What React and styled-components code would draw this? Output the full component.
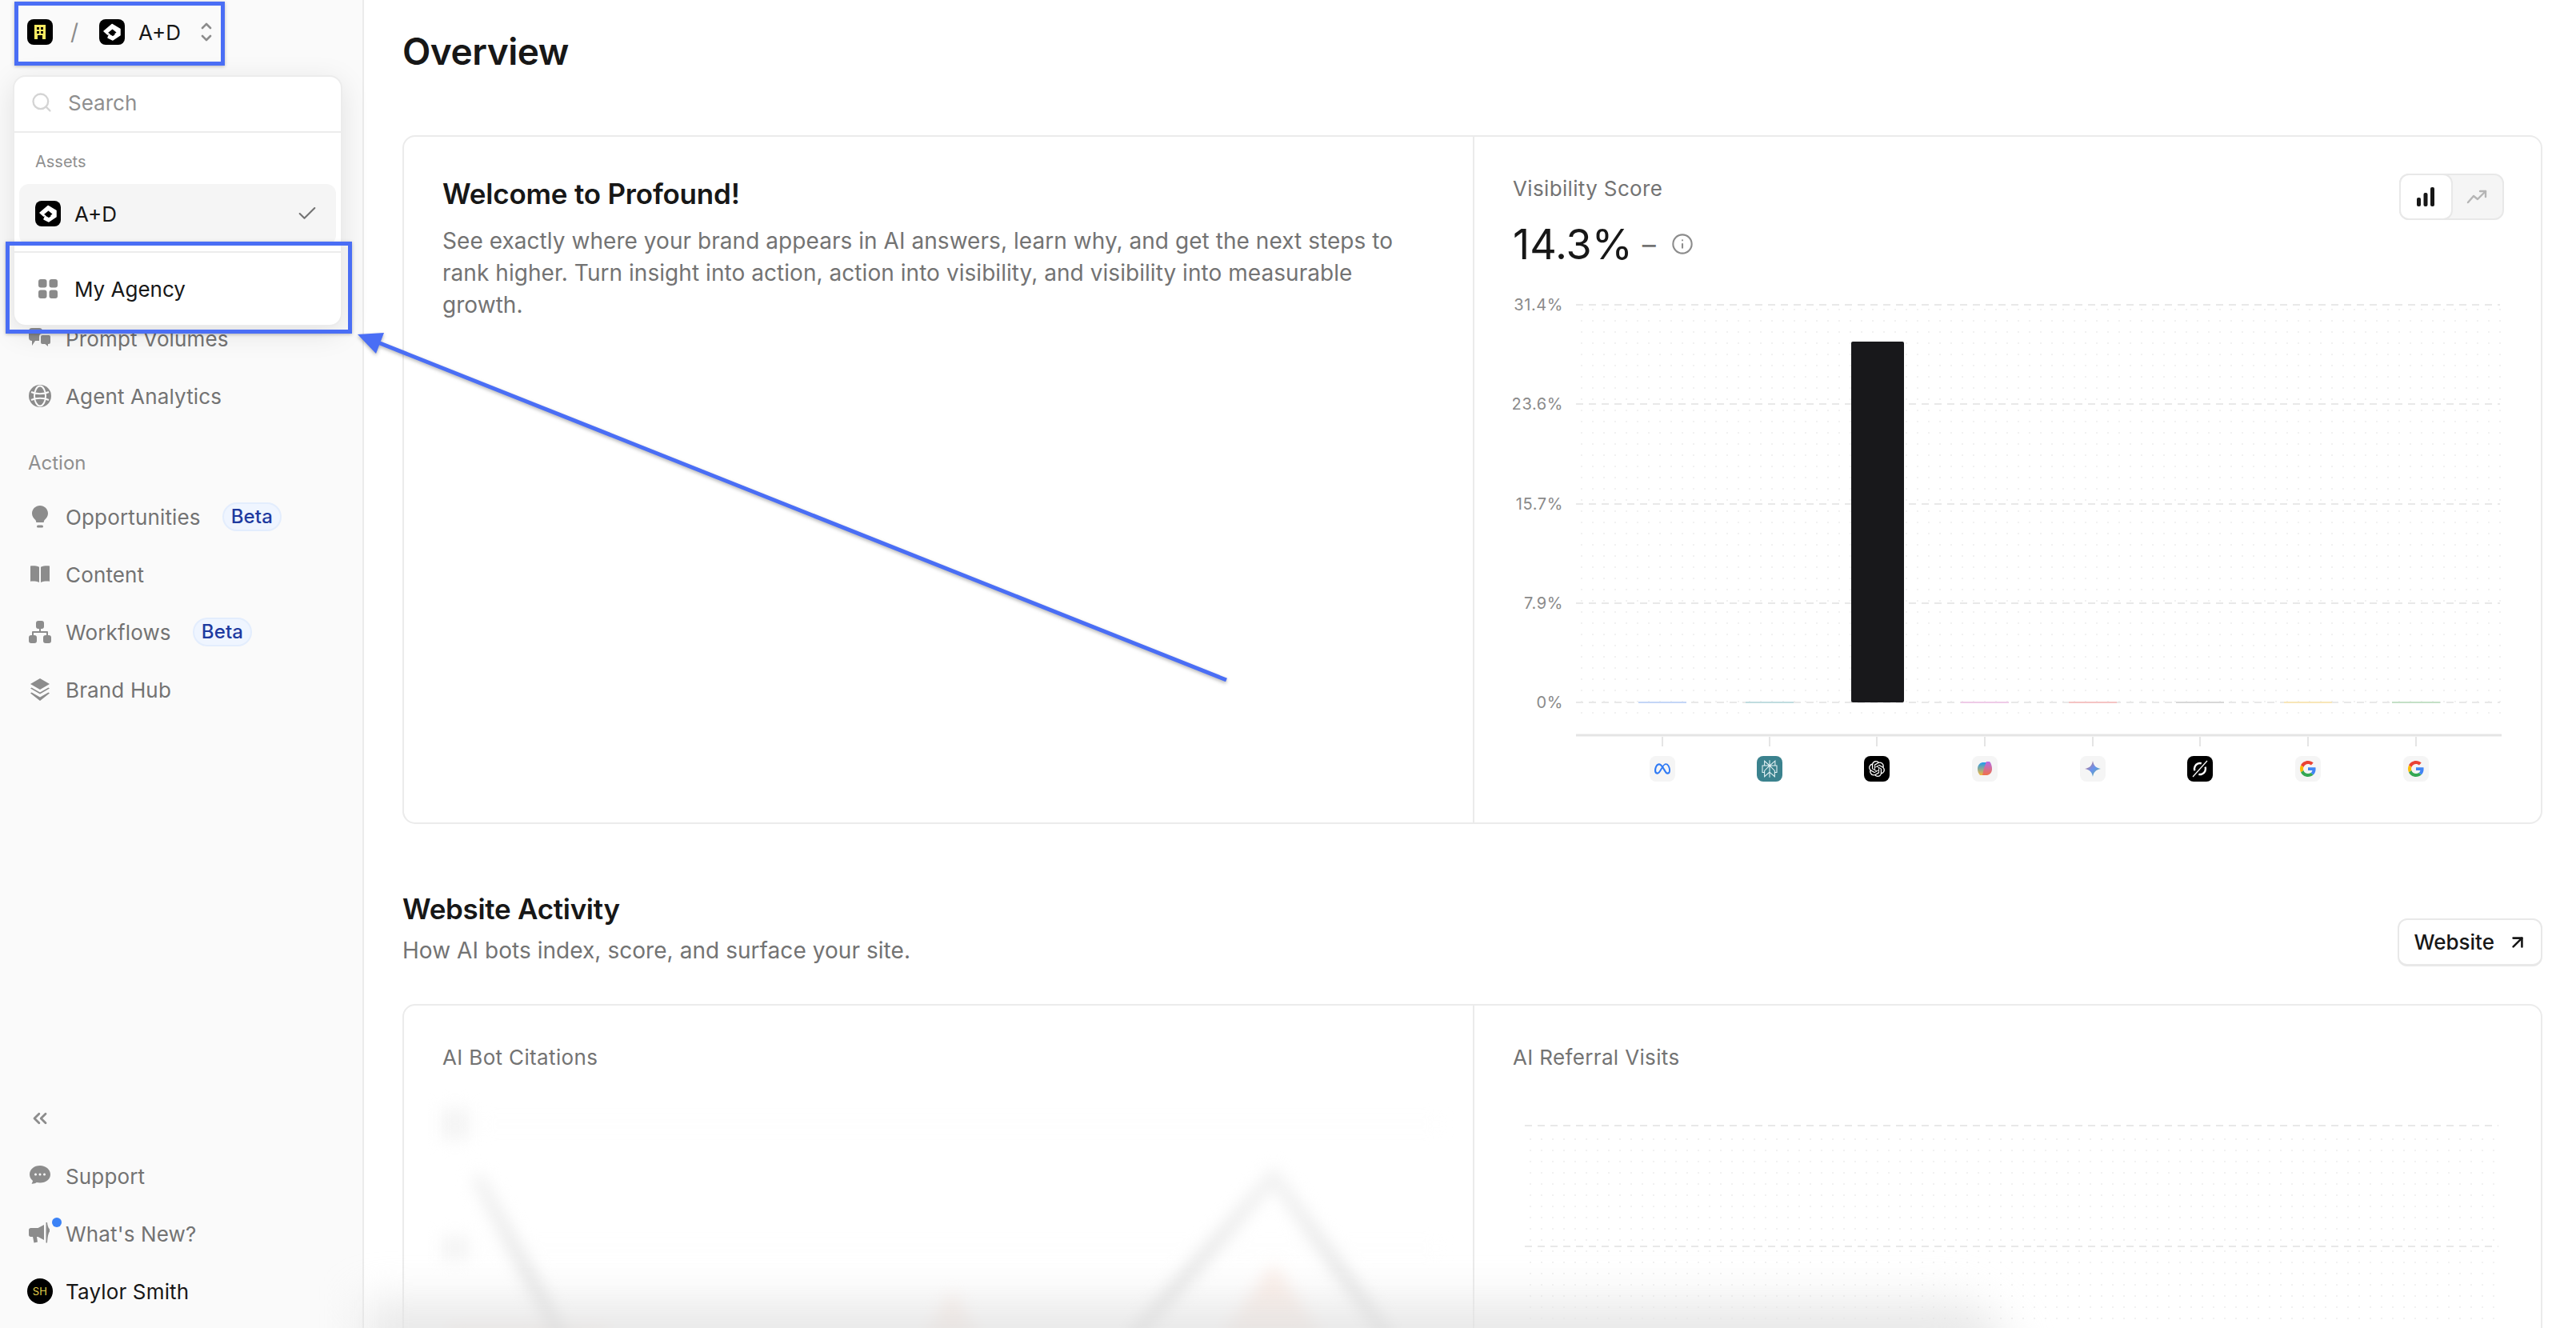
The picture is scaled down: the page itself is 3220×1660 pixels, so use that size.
import React from "react";
import styled, { createGlobalStyle } from "styled-components";
import { Search, Check, ChevronsLeft, ArrowUpRight, Info } from "lucide-react";
import { SiMeta, SiOpenai, SiPerplexity } from "react-icons/si";

const GlobalStyle = createGlobalStyle`
  html, body {
    margin: 0;
    padding: 0;
    background: #fff;
    font-family: "Inter", "Liberation Sans", sans-serif;
    color: #171717;
  }
  * { box-sizing: border-box; }
`;

const Page = styled.div`
  position: relative;
  display: flex;
  width: 3220px;
  height: 1660px;
  overflow: hidden;
  background: #fff;
`;

const Sidebar = styled.aside`
  display: flex;
  flex-direction: column;
  flex: 0 0 455px;
  height: 100%;
  padding-top: 387px;
  padding-bottom: 10px;
  background: #fafafa;
  border-right: 2px solid #ebebeb;
`;

const NavRow = styled.div`
  display: flex;
  align-items: center;
  gap: 18px;
  height: 72px;
  padding-left: 36px;
  font-size: 26px;
  letter-spacing: 0.15px;
  color: ${(p) => (p.$strong ? "#171717" : "#737373")};
`;

const IconSlot = styled.span`
  position: relative;
  display: flex;
  align-items: center;
  justify-content: center;
  flex: 0 0 28px;
  min-width: 0;
  height: 28px;
  color: #8c8c8c;
`;

const NavLabel = styled.div`
  display: flex;
  align-items: flex-end;
  height: 79px;
  padding: 0 0 17px 35px;
  font-size: 24px;
  color: #8f8f8f;
`;

const BetaBadge = styled.span`
  margin-left: 9px;
  padding: 0 9px;
  height: 36px;
  line-height: 32px;
  border-radius: 18px;
  background: #eff5ff;
  border: 2px solid #e3edfd;
  font-size: 24px;
  font-weight: 500;
  color: #1e3a9f;
`;

const SidebarFooter = styled.div`
  margin-top: auto;
`;

const NewDot = styled.span`
  position: absolute;
  top: -6px;
  right: -13px;
  width: 12px;
  height: 12px;
  border-radius: 50%;
  background: #3b82f6;
`;

const Avatar = styled.span`
  display: flex;
  align-items: center;
  justify-content: center;
  flex: 0 0 32px;
  width: 32px;
  height: 32px;
  border-radius: 50%;
  background: #000;
  color: #e3cf4c;
  font-size: 13px;
`;

const Switcher = styled.div`
  position: absolute;
  left: 23px;
  top: 5px;
  display: flex;
  align-items: center;
  width: 253px;
  height: 70px;
  padding-left: 11px;
  font-size: 26px;
  color: #171717;
`;

const Slash = styled.span`
  width: 58px;
  padding-right: 4px;
  text-align: center;
  font-size: 28px;
  color: #8c8c8c;
`;

const SwitcherName = styled.span`
  margin-left: 17px;
  width: 78px;
`;

const Popover = styled.div`
  position: absolute;
  left: 16px;
  top: 94px;
  width: 412px;
  height: 314px;
  background: #fff;
  border: 2px solid #ececec;
  border-radius: 16px;
  box-shadow: 0 8px 36px rgba(0, 0, 0, 0.1);
`;

const SearchRow = styled.div`
  display: flex;
  align-items: center;
  gap: 19px;
  height: 70px;
  padding: 0 0 4px 20px;
  border-bottom: 2px solid #ececec;
  font-size: 26px;
  color: #8f8f8f;
`;

const MenuLabel = styled.div`
  height: 64px;
  padding: 22px 0 0 26px;
  font-size: 20px;
  line-height: 28px;
  color: #8f8f8f;
`;

const MenuItem = styled.div`
  display: flex;
  align-items: center;
  gap: 17px;
  height: 76px;
  margin: 0 6px;
  padding: 0 22px 2px 20px;
  border-radius: 12px;
  background: ${(p) => (p.$active ? "#f5f5f5" : "transparent")};
  font-size: 26px;
  color: #171717;
`;

const MenuCheck = styled.span`
  display: flex;
  margin-left: auto;
  color: #737373;
`;

const MenuDivider = styled.div`
  height: 2px;
  margin-top: 8px;
  background: #ececec;
`;

const AgencyRow = styled(MenuItem)`
  height: 92px;
  gap: 21px;
  padding-left: 24px;
`;

const Callout = styled.div`
  position: absolute;
  left: ${(p) => p.$x}px;
  top: ${(p) => p.$y}px;
  width: ${(p) => p.$w}px;
  height: ${(p) => p.$h}px;
  border: 5px solid #4a6ef5;
  box-shadow: 0 1px 4px rgba(0, 0, 0, 0.25);
  pointer-events: none;
`;

const ArrowLayer = styled.svg`
  position: absolute;
  left: 0;
  top: 0;
  pointer-events: none;
  filter: drop-shadow(0 2px 2px rgba(0, 0, 0, 0.3));
`;

const BottomShade = styled.div`
  position: absolute;
  left: 455px;
  bottom: -50px;
  width: 2060px;
  height: 85px;
  border-radius: 0 85px 0 0;
  background: rgba(226, 226, 226, 0.75);
  filter: blur(26px);
  pointer-events: none;
`;

const Main = styled.main`
  flex: 1;
  min-width: 0;
  padding: 34px 42px 0 48px;
`;

const PageTitle = styled.h1`
  margin: 0 0 75px;
  font-size: 46px;
  line-height: 60px;
  font-weight: 600;
  letter-spacing: -0.5px;
  color: #171717;
`;

const Card = styled.section`
  display: grid;
  grid-template-columns: 1338px 1fr;
  height: ${(p) => p.$h}px;
  border: 2px solid #ebebeb;
  border-radius: 16px;
  overflow: hidden;
`;

const Panel = styled.div`
  position: relative;
  padding: 49px 48px 0;
  border-right: ${(p) => (p.$divider ? "2px solid #ebebeb" : "none")};
`;

const WelcomeTitle = styled.h2`
  margin: 0 0 17px;
  font-size: 35px;
  line-height: 44px;
  font-weight: 600;
  letter-spacing: -0.2px;
`;

const WelcomeText = styled.p`
  margin: 0;
  width: 1220px;
  font-size: 28px;
  line-height: 40px;
  letter-spacing: 0.05px;
  color: #737373;
`;

const PanelLabel = styled.div`
  font-size: 26px;
  line-height: 32px;
  letter-spacing: 0.35px;
  color: #737373;
`;

const ScoreRow = styled.div`
  display: flex;
  align-items: center;
  height: 60px;
  margin: 23px 0 25px;
  font-size: 52px;
  letter-spacing: 0px;
  color: #171717;
`;

const ScoreDash = styled.span`
  margin: 0 19px 0 12px;
  font-size: 34px;
  color: #737373;
`;

const ScoreInfo = styled.span`
  display: flex;
  color: #8c8c8c;
`;

const Toggle = styled.div`
  position: absolute;
  top: 46px;
  right: 48px;
  display: flex;
  width: 131px;
  height: 58px;
  border: 2px solid #e8e8e8;
  border-radius: 12px;
  background: #f5f5f5;
`;

const ToggleButton = styled.span`
  display: flex;
  align-items: center;
  justify-content: center;
  flex: 1;
  margin: -2px 0 -2px ${(p) => (p.$active ? "-2px" : "0")};
  border-radius: 12px;
  background: ${(p) => (p.$active ? "#fff" : "transparent")};
  border: ${(p) => (p.$active ? "2px solid #e8e8e8" : "none")};
`;

const SectionHead = styled.div`
  display: flex;
  align-items: flex-end;
  justify-content: space-between;
  margin: 82px 0 47px;
`;

const SectionTitle = styled.h2`
  margin: 0 0 8px;
  font-size: 35px;
  line-height: 48px;
  font-weight: 600;
  letter-spacing: -0.3px;
`;

const SectionText = styled.p`
  margin: 0;
  font-size: 28px;
  line-height: 40px;
  letter-spacing: 0.05px;
  color: #737373;
`;

const OutlineButton = styled.div`
  display: flex;
  align-items: center;
  gap: 16px;
  height: 60px;
  padding: 0 16px 0 18px;
  border: 2px solid #e8e8e8;
  border-bottom-width: 3px;
  border-radius: 12px;
  font-size: 26px;
  font-weight: 500;
  background: #fff;
`;

const ChartSvg = styled.svg`
  display: block;
  margin-top: ${(p) => p.$top || 0}px;
`;

const BlurredChart = styled.svg`
  position: absolute;
  left: 0;
  top: 113px;
  filter: blur(10px);
`;

// small brand marks
const BuildingLogo = () => (
  <svg width="32" height="32" viewBox="0 0 32 32">
    <rect width="32" height="32" rx="8" fill="#000" />
    <path d="M9 7h14v18h-4v-5h-6v5H9z" fill="#fdeb62" />
    <g fill="#000">
      <rect x="12" y="10" width="3" height="3" />
      <rect x="17" y="10" width="3" height="3" />
      <rect x="12" y="15" width="3" height="3" />
      <rect x="17" y="15" width="3" height="3" />
    </g>
  </svg>
);

const HouseLogo = () => (
  <svg width="32" height="32" viewBox="0 0 32 32">
    <rect width="32" height="32" rx="8" fill="#000" />
    <path d="M6 15 16 6.500 26 12.500v7.500l-9 6-6-3 1.500-3.500 4.500 2.500 4-3-4.500-3.500-6 3.500z" fill="#fff" stroke="#fff" strokeWidth="1.500" strokeLinejoin="round" />
    <path d="M11 17 16.500 12.500 21.500 16.500 16.500 20.500 14 18.500z" fill="#000" />
  </svg>
);

const AgencyGrid = () => (
  <svg width="24" height="24" viewBox="0 0 24 24" fill="#8a8a8a">
    <rect width="10.5" height="10.5" rx="3" />
    <rect x="13.5" width="10.5" height="10.5" rx="3" />
    <rect y="13.5" width="10.5" height="10.5" rx="3" />
    <rect x="13.5" y="13.5" width="10.5" height="10.5" rx="3" />
  </svg>
);

const UpDown = () => (
  <svg width="14" height="26" viewBox="0 0 14 26" fill="none" stroke="#8c8c8c" strokeWidth="2.6" strokeLinecap="round" strokeLinejoin="round">
    <path d="M2 8l5-5 5 5" />
    <path d="M2 18l5 5 5-5" />
  </svg>
);

// nav glyphs
const GlobeIcon = () => (
  <svg width="28" height="28" viewBox="0 0 28 28">
    <circle cx="14" cy="14" r="14" fill="currentColor" />
    <g fill="none" stroke="#fafafa" strokeWidth="2">
      <ellipse cx="14" cy="14" rx="7" ry="12.5" />
      <path d="M3 9c6 3 16 3 22 0M3 19c6-3 16-3 22 0" />
    </g>
  </svg>
);

const BubblesIcon = () => (
  <svg width="28" height="28" viewBox="0 0 28 28" fill="currentColor">
    <path d="M0 5a4 4 0 0 1 4-4h9a4 4 0 0 1 4 4v8a4 4 0 0 1-4 4H8l-4 6v-6a4 4 0 0 1-4-4z" />
    <path d="M14 12a3 3 0 0 1 3-3h8a3 3 0 0 1 3 3v7a3 3 0 0 1-3 3v4l-5-4h-3a3 3 0 0 1-3-3z" stroke="#fafafa" strokeWidth="2" />
  </svg>
);

const BulbIcon = () => (
  <svg width="28" height="28" viewBox="0 0 28 28" fill="currentColor">
    <path d="M14 0C8.5 0 4 4.3 4 9.8c0 3.4 1.7 5.7 3.6 7.5 1.2 1.1 1.6 2.2 1.7 3.7h9.4c.1-1.5.5-2.6 1.7-3.7 1.900-1.800 3.600-4.100 3.600-7.500C24 4.300 19.500 0 14 0z" />
    <rect x="10" y="24.500" width="8" height="3" rx="1.500" />
  </svg>
);

const BookIcon = () => (
  <svg width="28" height="28" viewBox="0 0 28 28" fill="currentColor">
    <path d="M2 3.500c3.600-.5 7.600-.2 11 1.200V24c-3.400-1.400-7.400-1.700-11-1.200z" />
    <path d="M26 3.500c-3.600-.5-7.600-.2-11 1.200V24c3.400-1.400 7.400-1.700 11-1.200z" />
  </svg>
);

const FlowIcon = () => (
  <svg width="28" height="28" viewBox="0 0 28 28" fill="currentColor">
    <rect x="9" y="0" width="10" height="10" rx="3" />
    <rect x="0" y="18" width="10" height="10" rx="3" />
    <rect x="18" y="18" width="10" height="10" rx="3" />
    <path d="M13 9h2v4h8a1 1 0 0 1 1 1v5h-2v-4H6v4H4v-5a1 1 0 0 1 1-1h8z" />
  </svg>
);

const LayersIcon = () => (
  <svg width="28" height="28" viewBox="0 0 28 28" fill="currentColor">
    <path d="M14 0l12 7-12 7L2 7z" />
    <path d="M3.500 11.500 14 17.500l10.500-6 1.500 1-12 7-12-7z" />
    <path d="M3.500 17.500 14 23.500l10.500-6 1.500 1L14 28 2 18.500z" />
  </svg>
);

const SupportIcon = () => (
  <svg width="28" height="28" viewBox="0 0 28 28">
    <path d="M14 1C6.500 1 1 5.800 1 12c0 3.300 1.500 6 4 7.900-.2 1.500-.9 2.800-1.700 3.700 2.400.2 4.900-.3 6.500-1.500 1.300.3 2.700.4 4.200.4 7.500 0 13-4.500 13-10.500S21.500 1 14 1z" fill="currentColor" />
    <g fill="#fafafa">
      <circle cx="8.500" cy="12" r="1.500" />
      <circle cx="14" cy="12" r="1.500" />
      <circle cx="19.500" cy="12" r="1.500" />
    </g>
  </svg>
);

const MegaphoneIcon = () => (
  <svg width="28" height="28" viewBox="0 0 28 28" fill="currentColor">
    <path d="M0 9.500C0 8 1 7 2.500 7h9L19 3v19l-7.500-4H10l1 6.500-4.500 1L5 18H2.500C1 18 0 17 0 15.500z" />
    <path d="M21.500 0h1.500c.5 4 1 6 3 8.500v3c-2 2.500-2.500 8-3 14h-1.500z" />
  </svg>
);

// engine logos on the chart axis
const MetaMark = () => <SiMeta x="-10" y="-10" size={20} color="#2f7af5" />;
const PerplexityMark = () => <SiPerplexity x="-11" y="-11" size={22} color="#e6f3f5" />;
const OpenAiMark = () => <SiOpenai x="-10" y="-10" size={20} color="#fff" />;

const CopilotMark = () => (
  <g>
    <path d="M-9 0c0-4 2-7 6-8h6L1 1l-3 7H-6C-8 6-9 3-9 0z" fill="url(#copilotA)" />
    <path d="M9 0c0 4-2 7-6 8h-6l2-9 3-8h4c2 2 3 6 3 9z" fill="url(#copilotB)" />
  </g>
);

const GeminiMark = () => (
  <path d="M0-10C1-4 4-1 10 0 4 1 1 4 0 10-1 4-4 1-10 0-4-1-1-4 0-10z" fill="url(#gemini)" />
);

const OrbitMark = () => (
  <g fill="none" stroke="#fff">
    <circle cx="0" cy="0" r="7" strokeWidth="2.400" strokeDasharray="15 7" transform="rotate(-20)" />
    <path d="M-9 10 9-10" strokeWidth="1.200" />
  </g>
);

const GoogleMark = () => (
  <g transform="translate(-10,-10) scale(0.4167)">
    <path fill="#EA4335" d="M24 9.500c3.540 0 6.710 1.220 9.210 3.600l6.850-6.850C35.900 2.380 30.470 0 24 0 14.620 0 6.510 5.380 2.560 13.220l7.980 6.190C12.430 13.720 17.740 9.500 24 9.500z" />
    <path fill="#4285F4" d="M46.980 24.550c0-1.570-.15-3.090-.38-4.550H24v9.020h12.940c-.58 2.960-2.260 5.480-4.780 7.180l7.730 6c4.510-4.180 7.090-10.360 7.090-17.650z" />
    <path fill="#FBBC05" d="M10.530 28.590c-.48-1.450-.76-2.990-.76-4.590s.27-3.140.76-4.590l-7.980-6.190C.92 16.460 0 20.120 0 24c0 3.880.92 7.540 2.560 10.780l7.970-6.190z" />
    <path fill="#34A853" d="M24 48c6.480 0 11.930-2.130 15.890-5.810l-7.730-6c-2.150 1.450-4.920 2.300-8.160 2.300-6.260 0-11.570-4.220-13.470-9.910l-7.980 6.190C6.510 42.620 14.620 48 24 48z" />
  </g>
);

const engines = [
  { x: 2078, tile: "#f5f5f5", line: "#c4d6f7", Mark: MetaMark },
  { x: 2212, tile: "#3b828e", line: "#c0dcdf", Mark: PerplexityMark },
  { x: 2346, tile: "#000", line: null, Mark: OpenAiMark },
  { x: 2481, tile: "#f5f5f5", line: "#efcbe7", Mark: CopilotMark },
  { x: 2616, tile: "#f5f5f5", line: "#f5c4c4", Mark: GeminiMark },
  { x: 2750, tile: "#000", line: "#d8d8d8", Mark: OrbitMark },
  { x: 2885, tile: "#f5f5f5", line: "#f8e6b8", Mark: GoogleMark },
  { x: 3020, tile: "#f5f5f5", line: "#c4e0c6", Mark: GoogleMark },
];

const ticks = [
  { y: 381, label: "31.4%" },
  { y: 505, label: "23.6%" },
  { y: 630, label: "15.7%" },
  { y: 754, label: "7.9%" },
  { y: 878, label: "0%" },
];

const Dots = ({ id, x, y }) => (
  <pattern id={id} x={x} y={y} width="14" height="14" patternUnits="userSpaceOnUse">
    <rect width="2" height="2" fill="#f1f1f1" />
  </pattern>
);

const VisibilityChart = () => (
  <ChartSvg width="1239" height="625" viewBox="1891 360 1239 625">
    <defs>
      <Dots id="visDots" x="1976" y="386" />
      <linearGradient id="copilotA" x1="0" y1="0" x2="0" y2="1">
        <stop offset="0" stopColor="#1f9cf0" />
        <stop offset="1" stopColor="#f5b73c" />
      </linearGradient>
      <linearGradient id="copilotB" x1="0" y1="0" x2="0" y2="1">
        <stop offset="0" stopColor="#b56be8" />
        <stop offset="1" stopColor="#f0704a" />
      </linearGradient>
      <linearGradient id="gemini" x1="0" y1="0" x2="1" y2="1">
        <stop offset="0" stopColor="#e0705f" />
        <stop offset="0.5" stopColor="#6a92ef" />
        <stop offset="1" stopColor="#58b58b" />
      </linearGradient>
    </defs>
    <rect x="1976" y="386" width="1150" height="510" fill="url(#visDots)" />
    {ticks.map((t) => (
      <g key={t.y}>
        <line x1="1970" x2="3125" y1={t.y} y2={t.y} stroke="#e8e8e8" strokeWidth="2" strokeDasharray="9 7" />
        <text x="1954" y={t.y + 7} textAnchor="end" fontSize="20" letterSpacing="0.6" fill="#8a8a8a" fontFamily="Inter, sans-serif">{t.label}</text>
      </g>
    ))}
    <rect x="2314" y="427" width="66" height="451" rx="2" fill="#18181b" />
    <line x1="1970" x2="3127" y1="919" y2="919" stroke="#e5e5e5" strokeWidth="3" />
    {engines.map(({ x, tile, line, Mark }) => (
      <g key={x}>
        {line && <line x1={x - 30} x2={x + 30} y1="878" y2="878" stroke={line} strokeWidth="2" />}
        <line x1={x} x2={x} y1="921" y2="933" stroke="#e5e5e5" strokeWidth="2" />
        <rect x={x - 16} y="945" width="32" height="32" rx="8" fill={tile} />
        <g transform={`translate(${x},961)`}>
          <Mark />
        </g>
      </g>
    ))}
  </ChartSvg>
);

const ReferralChart = () => (
  <ChartSvg $top={30} width="1239" height="310" viewBox="1891 1370 1239 310">
    <defs>
      <Dots id="refDots" x="1912" y="1425" />
    </defs>
    <rect x="1912" y="1425" width="1210" height="260" fill="url(#refDots)" />
    {[1409, 1560].map((y) => (
      <line key={y} x1="1906" x2="3123" y1={y} y2={y} stroke="#e8e8e8" strokeWidth="2" strokeDasharray="9 7" />
    ))}
  </ChartSvg>
);

const CitationsBlur = () => (
  <BlurredChart width="1336" height="320" viewBox="505 1370 1336 320">
    <defs>
      <linearGradient id="blurLine" x1="0" y1="0" x2="0" y2="1">
        <stop offset="0" stopColor="#efefef" />
        <stop offset="1" stopColor="#d6d6d6" />
      </linearGradient>
    </defs>
    <g fill="#f4f4f4">
      <rect x="552" y="1385" width="34" height="40" />
      <rect x="552" y="1545" width="34" height="30" />
    </g>
    <g fill="none" stroke="#fafafa" strokeWidth="3">
      <path d="M600 1405H1800M600 1560H1800" />
    </g>
    <g fill="#fbeee8">
      <path d="M1592 1580 1520 1680H1660Z" />
      <path d="M1190 1615 1150 1680H1230Z" />
      <path d="M560 1660H760V1690H560Z" />
    </g>
    <path d="M596 1470 706 1680M1410 1680 1592 1470 1740 1680" fill="none" stroke="url(#blurLine)" strokeWidth="14" />
  </BlurredChart>
);

const App = () => (
  <Page>
    <GlobalStyle />
    <Sidebar>
      <NavRow><IconSlot><BubblesIcon /></IconSlot>Prompt Volumes</NavRow>
      <NavRow><IconSlot><GlobeIcon /></IconSlot>Agent Analytics</NavRow>
      <NavLabel>Action</NavLabel>
      <NavRow><IconSlot><BulbIcon /></IconSlot>Opportunities<BetaBadge>Beta</BetaBadge></NavRow>
      <NavRow><IconSlot><BookIcon /></IconSlot>Content</NavRow>
      <NavRow><IconSlot><FlowIcon /></IconSlot>Workflows<BetaBadge>Beta</BetaBadge></NavRow>
      <NavRow><IconSlot><LayersIcon /></IconSlot>Brand Hub</NavRow>
      <SidebarFooter>
        <NavRow><IconSlot><ChevronsLeft size={28} strokeWidth={2.4} /></IconSlot></NavRow>
        <NavRow><IconSlot><SupportIcon /></IconSlot>Support</NavRow>
        <NavRow><IconSlot><MegaphoneIcon /><NewDot /></IconSlot>What's New?</NavRow>
        <NavRow $strong><IconSlot><Avatar>SH</Avatar></IconSlot>Taylor Smith</NavRow>
      </SidebarFooter>
    </Sidebar>

    <Main>
      <PageTitle>Overview</PageTitle>
      <Card $h={861}>
        <Panel $divider>
          <WelcomeTitle>Welcome to Profound!</WelcomeTitle>
          <WelcomeText>
            See exactly where your brand appears in AI answers, learn why, and get the next steps to rank higher. Turn insight into action, action into visibility, and visibility into measurable growth.
          </WelcomeText>
        </Panel>
        <Panel>
          <PanelLabel>Visibility Score</PanelLabel>
          <ScoreRow>
            14.3%
            <ScoreDash>–</ScoreDash>
            <ScoreInfo><Info size={28} strokeWidth={1.8} /></ScoreInfo>
          </ScoreRow>
          <Toggle>
            <ToggleButton $active>
              <svg width="26" height="26" viewBox="0 0 26 26" fill="#171717">
                <rect x="2" y="14" width="5" height="11" rx="2" />
                <rect x="10.500" y="8" width="5" height="17" rx="2" />
                <rect x="19" y="1" width="5" height="24" rx="2" />
              </svg>
            </ToggleButton>
            <ToggleButton>
              <svg width="28" height="28" viewBox="0 0 28 28" fill="none" stroke="#b5b5b5" strokeWidth="2.400" strokeLinecap="round" strokeLinejoin="round">
                <path d="M2 21l7-8 5 4 10-10" />
                <path d="M17 7h7v7" />
              </svg>
            </ToggleButton>
          </Toggle>
          <VisibilityChart />
        </Panel>
      </Card>

      <SectionHead>
        <div>
          <SectionTitle>Website Activity</SectionTitle>
          <SectionText>How AI bots index, score, and surface your site.</SectionText>
        </div>
        <OutlineButton>Website<ArrowUpRight size={26} strokeWidth={2.4} /></OutlineButton>
      </SectionHead>

      <Card $h={600}>
        <Panel $divider>
          <PanelLabel>AI Bot Citations</PanelLabel>
          <CitationsBlur />
        </Panel>
        <Panel>
          <PanelLabel>AI Referral Visits</PanelLabel>
          <ReferralChart />
        </Panel>
      </Card>
    </Main>

    <BottomShade />

    <Switcher>
      <BuildingLogo />
      <Slash>/</Slash>
      <HouseLogo />
      <SwitcherName>A+D</SwitcherName>
      <UpDown />
    </Switcher>
    <Popover>
      <SearchRow><Search size={28} strokeWidth={2} color="#d4d4d4" />Search</SearchRow>
      <MenuLabel>Assets</MenuLabel>
      <MenuItem $active>
        <HouseLogo />
        A+D
        <MenuCheck><Check size={28} strokeWidth={1.8} /></MenuCheck>
      </MenuItem>
      <MenuDivider />
      <AgencyRow><AgencyGrid />My Agency</AgencyRow>
    </Popover>

    <Callout $x={18} $y={2} $w={263} $h={80} />
    <Callout $x={7} $y={302} $w={433} $h={115} />
    <ArrowLayer width="3220" height="1660" viewBox="0 0 3220 1660">
      <line x1="1533" y1="850" x2="470" y2="427" stroke="#4a6ef5" strokeWidth="5" />
      <path d="M447 418 480 416 470 442Z" fill="#4a6ef5" />
    </ArrowLayer>
  </Page>
);

export default App;
